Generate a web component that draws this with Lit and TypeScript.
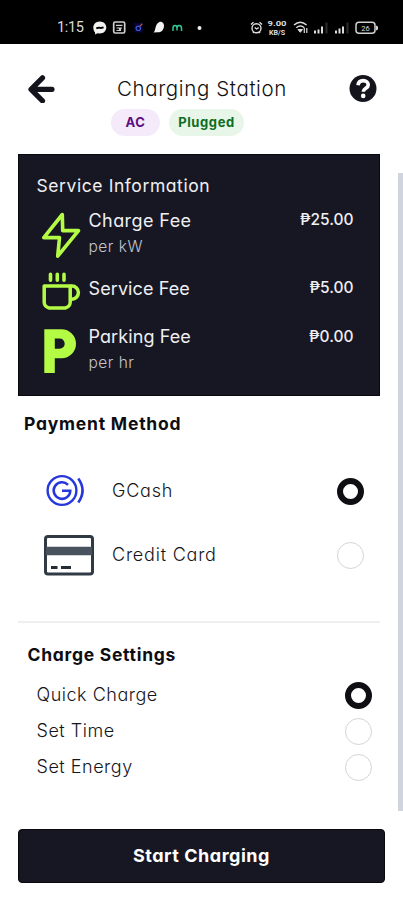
import { LitElement, html, svg, css } from "lit";
import { customElement, property, state } from "lit/decorators.js";
import { classMap } from "lit/directives/class-map.js";

const boltIcon = svg`<path d="M22.300 5.500 3.800 28.600h15.700l-1.800 18.600 20.800-25.600H22.700z" fill="none" stroke="#b4fb45" stroke-width="3.600" stroke-linejoin="round"/>`;
const cupIcon = svg`<g fill="none" stroke="#b4fb45" stroke-width="3.500" stroke-linejoin="round">
  <path d="M4.200 20h26v16.500q-.3 4.300-5 5.500H9.200q-4.700-1.200-5-5.500z"/>
  <path d="M30.200 20h1.800a6.400 6.600 0 0 1 0 13.200h-1.800"/>
  <path d="M10.500 8.300v6M17.300 8.300v6M24 8.300v6" stroke-linecap="round" stroke-width="3.600"/></g>`;
const parkingIcon = svg`<path fill="#b4fb45" fill-rule="evenodd" d="M4.300 4.200h17.200a14.500 14.500 0 0 1 0 29h-6.700v14.800H4.300zm10.500 9.400v10.200h4.800a5.100 5.100 0 0 0 0-10.200z"/>`;

@customElement("radio-dot")
class RadioDot extends LitElement {
  @property({ type: Boolean }) checked = false;
  static styles = css`
    :host { display: block; width: 27px; height: 27px; }
    .ring { box-sizing: border-box; width: 27px; height: 27px; border-radius: 50%; border: 1px solid #d4d4d6; background: #fff; }
    .on { border: 6.5px solid #0e0e13; }
  `;
  render() {
    return html`<div class=${classMap({ ring: true, on: this.checked })}></div>`;
  }
}

@customElement("status-bar")
class StatusBar extends LitElement {
  static styles = css`
    :host { display: block; height: 44px; background: #000; }
    svg { display: block; }
    text { font-family: Roboto, sans-serif; fill: #dcdcdc; }
    .time { font-size: 14.5px; }
    .rate { font-size: 7.5px; font-weight: 700; }
    .level { font-size: 7.5px; }
  `;
  render() {
    return html`<svg width="403" height="44" viewBox="0 0 403 44">
      <text class="time" x="57" y="32.3" textLength="27">1:15</text>
      <path d="M99.800 21.500c4 0 6.500 2.800 6.500 6s-2.500 6-6.500 6l-2.400-.2-2.200 1.200-.2-2.200c-1-1-1.700-2.800-1.700-4.800 0-3.200 2.500-6 6.500-6z" fill="#f2f2f2"/>
      <path d="M96.300 28.200l2.700-.6 2 .4 2.600-.6" stroke="#000" stroke-width="1.900" fill="none"/>
      <rect x="113.700" y="22" width="11" height="11" rx="1.500" fill="none" stroke="#cfcfcf" stroke-width="1.700"/>
      <path d="M116 25.300h6.500M116.500 28h3v2.500h-3M122 28h-1.500v3" fill="none" stroke="#cfcfcf" stroke-width="1.200"/>
      <rect x="134.500" y="23" width="8" height="9.500" fill="#05063c"/>
      <circle cx="138.300" cy="28.300" r="2.200" fill="none" stroke="#3d58d0" stroke-width="1.200"/>
      <path d="M140 26.300l2.300-2.500" stroke="#b8483c" stroke-width="1.300"/>
      <path d="M153.500 32.500c2.500-1.800 1.200-8 5.500-10.300 3-1.300 5.400 1.500 5 4.200-.5 4.200-3.600 6.400-6.600 5.900z" fill="#f2f2f2"/>
      <path d="M173 31v-3q0-2.500 2-2.500t2 2.500v2.500M177 28q0-2.500 2.200-2.500T181.500 28v3" fill="none" stroke="#2fc795" stroke-width="1.500"/>
      <circle cx="199.500" cy="28" r="2" fill="#eee"/>
      <g fill="none" stroke="#dcdcdc" stroke-width="1.400">
        <circle cx="256.500" cy="28.300" r="4.500"/>
        <path d="M251 24.500l2.500-2.300M262 24.500l-2.500-2.300M254.800 27.500l1.700 1.500 2.200-1.300M253 33l1-1.200M260 33l-1-1.200"/>
      </g>
      <text class="rate" x="267.500" y="26" textLength="19" lengthAdjust="spacingAndGlyphs">9.00</text>
      <text class="rate" x="269" y="34.500" textLength="16" lengthAdjust="spacingAndGlyphs">KB/S</text>
      <g fill="none" stroke="#dcdcdc" stroke-width="1.500">
        <path d="M294 25q6.300-5.500 12.600 0M296.300 27.700q4-3.400 8 0"/>
        <path d="M298 29.500h4.500l-2.200 2.800z" fill="#dcdcdc" stroke-width="1"/>
        <path d="M304.300 33v-5M306.800 33v-5" stroke-width="1.200"/>
      </g>
      <g stroke-width="2" stroke="#dcdcdc">
        <path d="M315 33.500v-3M318.500 33.500v-4M322 33.500v-7M336 33.500v-3M339.500 33.500v-5M343 33.500v-7"/>
        <path d="M326.500 33.500v-11M347.500 33.500v-11" stroke="#2d2d2d"/>
      </g>
      <rect x="356" y="22.300" width="19" height="11" rx="3" fill="none" stroke="#d0d0d0" stroke-width="1.500"/>
      <path d="M376 25.500l2 1v3l-2 1z" fill="#d0d0d0"/>
      <text class="level" x="361.300" y="30.600">26</text>
    </svg>`;
  }
}

@customElement("app-root")
class AppRoot extends LitElement {
  @state() method = "GCash";
  @state() setting = "Quick Charge";

  fees = [
    { key: "charge", icon: boltIcon, name: "Charge Fee", unit: "per kW", price: "₱25.00" },
    { key: "service", icon: cupIcon, name: "Service Fee", unit: "", price: "₱5.00" },
    { key: "parking", icon: parkingIcon, name: "Parking Fee", unit: "per hr", price: "₱0.00" },
  ];

  static styles = css`
    :host {
      display: block; position: relative; height: 900px; overflow: hidden; background: #fff; color: #15151c;
      font-family: Inter, "Open Sans", sans-serif; font-feature-settings: "cv11"; font-size: 18px; font-weight: 400;
    }
    * { box-sizing: border-box; white-space: nowrap; }
    svg { display: block; }
    .header { height: 110px; padding: 31px 26px 0 27px; }
    .bar { display: flex; justify-content: space-between; align-items: center; height: 28px; }
    .title { font-size: 20.5px; font-weight: 300; letter-spacing: 0.62px; color: #111; padding-bottom: 2px; }
    .chips { display: flex; gap: 9px; margin: 6px 0 0 84px; }
    .chip { height: 27px; line-height: 27px; border-radius: 14px; font-size: 13px; font-weight: 700; text-align: center; letter-spacing: 0.6px; }
    .ac { width: 49px; background: #f4eaf9; color: #5b0d83; }
    .plugged { width: 75px; background: #e8f6ea; color: #0c6d22; }
    .card { width: 362px; height: 242px; margin-left: 18px; padding: 19px 25.5px 0 17.5px; background: #171723; border: 1px solid #08080d; color: #efeff3; }
    .heading { height: 24px; line-height: 24px; font-size: 17.5px; letter-spacing: 0.58px; }
    .fee { display: grid; grid-template-columns: 52px 1fr auto; line-height: 24px; }
    .charge { height: 57px; margin-top: 11px; }
    .service { height: 59px; }
    .service .label, .service .price { padding-top: 11px; }
    .icon { margin-left: 3px; }
    .name { letter-spacing: 0.1px; }
    .charge .name { letter-spacing: 0.42px; }
    .unit { font-size: 15.5px; font-weight: 300; line-height: 27px; letter-spacing: 0.5px; color: #c4c4cd; }
    .price { font-size: 15.5px; font-weight: 500; position: relative; top: -1px; }
    .parking .price { top: 0; }
    .section { height: 30px; line-height: 30px; font-size: 17.5px; font-weight: 700; letter-spacing: 0.78px; color: #0e0e12; }
    .payment { margin: 13px 0 0 24px; }
    .methods { width: 362px; margin-left: 18px; height: 184px; padding: 20px 16px 0 24px; border-bottom: 2px solid #efeff0; }
    .method { display: grid; grid-template-columns: 70px 1fr 27px; align-items: center; height: 64px; font-weight: 300; letter-spacing: 0.78px; }
    .method span, .option span { line-height: 24px; padding-bottom: 1px; }
    .settings { margin: 17px 0 0 27.5px; letter-spacing: 0.72px; }
    .options { padding: 7px 31px 0 36.5px; }
    .option { display: flex; justify-content: space-between; align-items: center; height: 36px; font-weight: 300; letter-spacing: 0.52px; }
    .start { width: 367px; height: 54px; margin: 44px 0 0 18px; padding: 0 0 1px; display: block; border: 1px solid #08080d; border-radius: 4px; background: #171723; color: #fff; font: 700 18px Inter, sans-serif; letter-spacing: 0.52px; font-feature-settings: "cv11"; }
    .scroll { position: absolute; right: 0; top: 173px; width: 5px; height: 638px; background: #d0d4de; }
  `;

  render() {
    return html`
      <status-bar></status-bar>
      <div class="header">
        <div class="bar">
          <svg width="28" height="28" viewBox="0 0 28 28"><path d="M15.500 2.800 4 14.300l11.500 11.500M5 14.300h20" fill="none" stroke="#14141c" stroke-width="5.200" stroke-linecap="round" stroke-linejoin="round"/></svg>
          <div class="title">Charging Station</div>
          <svg width="28" height="28" viewBox="0 0 28 28"><circle cx="14" cy="13.500" r="13.500" fill="#14141c"/><path d="M9 10.200c.4-3 2.500-4.500 5.200-4.500 2.900 0 5 1.600 5 4.200 0 3.400-4.900 3.200-4.900 6.900" fill="none" stroke="#fff" stroke-width="3.700"/><circle cx="14.200" cy="20.900" r="2.300" fill="#fff"/></svg>
        </div>
        <div class="chips"><div class="chip ac">AC</div><div class="chip plugged">Plugged</div></div>
      </div>
      <div class="card">
        <div class="heading">Service Information</div>
        ${this.fees.map((f) => html`
          <div class="fee ${f.key}">
            <svg class="icon" width="44" height="50" viewBox="0 0 44 50">${f.icon}</svg>
            <div class="label"><div class="name">${f.name}</div>${f.unit ? html`<div class="unit">${f.unit}</div>` : ""}</div>
            <div class="price">${f.price}</div>
          </div>`)}
      </div>
      <div class="section payment">Payment Method</div>
      <div class="methods">
        ${["GCash", "Credit Card"].map((m) => html`
          <div class="method" @click=${() => (this.method = m)}>
            ${m === "GCash"
              ? html`<svg width="54" height="44" viewBox="0 0 54 44"><g fill="none" stroke="#2637dc" stroke-width="2.400"><circle cx="20" cy="21.500" r="14.400"/><path d="M26 15.800a8.300 8.300 0 1 0 2.300 5.900h-8.300" stroke-width="2.500"/><path d="M36.300 9.500q8.500 12 0 24" stroke-width="2.600"/></g></svg>`
              : html`<svg width="54" height="44" viewBox="0 0 54 44"><rect x="3.500" y="3.500" width="47" height="37.500" rx="2.500" fill="#fff" stroke="#303a44" stroke-width="3"/><path d="M4 18h46" stroke="#49535d" stroke-width="8.500"/><path d="M9 34.500h6.500M19 34.500h10" stroke="#252c33" stroke-width="3"/></svg>`}
            <span>${m}</span>
            <radio-dot ?checked=${this.method === m}></radio-dot>
          </div>`)}
      </div>
      <div class="section settings">Charge Settings</div>
      <div class="options">
        ${["Quick Charge", "Set Time", "Set Energy"].map((s) => html`
          <div class="option" @click=${() => (this.setting = s)}>
            <span>${s}</span><radio-dot ?checked=${this.setting === s}></radio-dot>
          </div>`)}
      </div>
      <button class="start">Start Charging</button>
      <div class="scroll"></div>
    `;
  }
}
